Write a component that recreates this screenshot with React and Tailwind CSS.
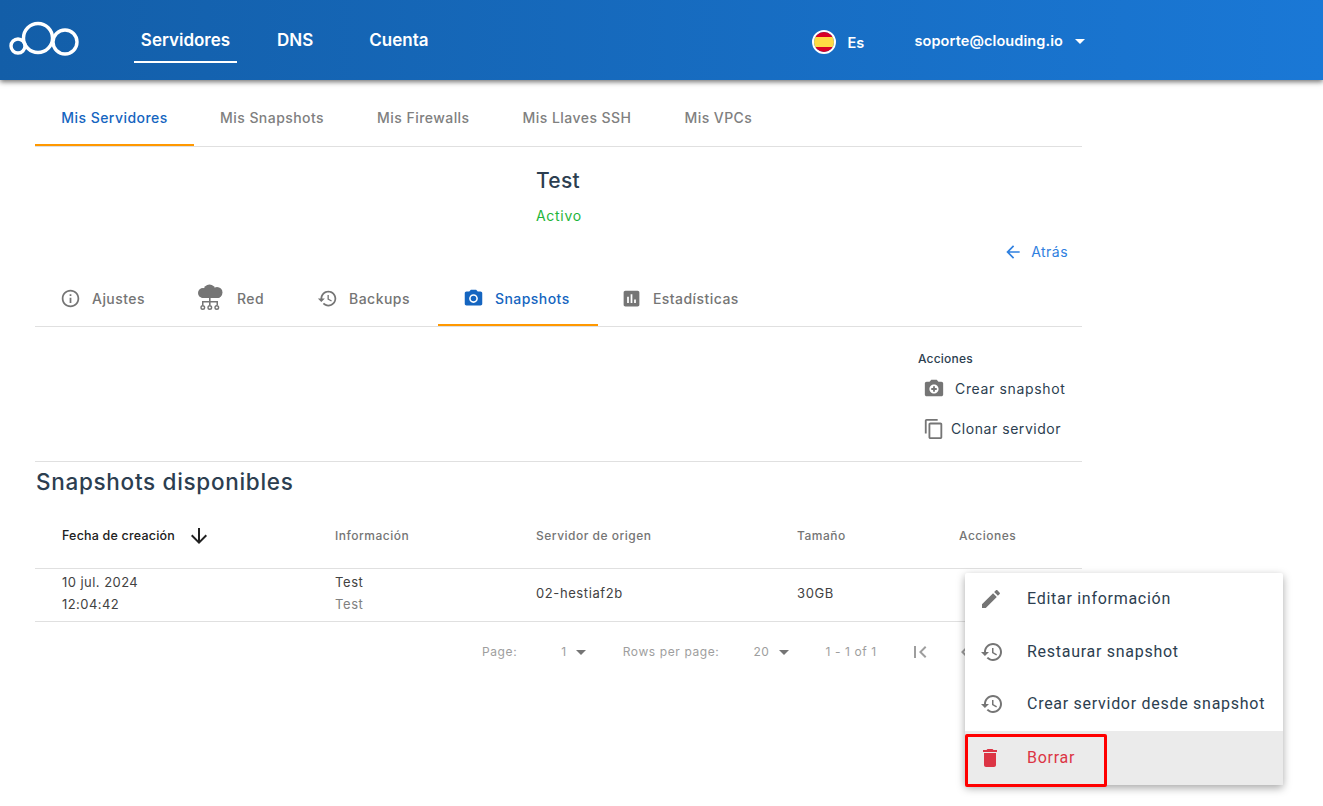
import { useState } from "react";

const paths = {
  info: "M11 7h2v2h-2zm0 4h2v6h-2zm1-9C6.48 2 2 6.48 2 12s4.48 10 10 10 10-4.48 10-10S17.52 2 12 2zm0 18c-4.41 0-8-3.59-8-8s3.59-8 8-8 8 3.59 8 8-3.59 8-8 8z",
  history: "M13 3c-4.97 0-9 4.03-9 9H1l3.89 3.89.07.14L9 12H6c0-3.87 3.13-7 7-7s7 3.13 7 7-3.13 7-7 7c-1.93 0-3.68-.79-4.94-2.06l-1.42 1.42C8.27 19.99 10.51 21 13 21c4.97 0 9-4.03 9-9s-4.03-9-9-9zm-1 5v5l4.28 2.54.72-1.21-3.5-2.08V8H12z",
  camera: "M9 2L7.17 4H4c-1.1 0-2 .9-2 2v12c0 1.1.9 2 2 2h16c1.1 0 2-.9 2-2V6c0-1.1-.9-2-2-2h-3.17L15 2H9zm3 15c-2.76 0-5-2.24-5-5s2.24-5 5-5 5 2.24 5 5-2.24 5-5 5zm0-8.2a3.2 3.2 0 1 0 0 6.4 3.2 3.2 0 0 0 0-6.4z",
  cameraAdd: "M9 2L7.17 4H4c-1.1 0-2 .9-2 2v12c0 1.1.9 2 2 2h16c1.1 0 2-.9 2-2V6c0-1.1-.9-2-2-2h-3.17L15 2H9zm3 15c-2.76 0-5-2.24-5-5s2.24-5 5-5 5 2.24 5 5-2.24 5-5 5zm-1-6H9v2h2v2h2v-2h2v-2h-2V9h-2v2z",
  stats: "M19 3H5c-1.1 0-2 .9-2 2v14c0 1.1.9 2 2 2h14c1.1 0 2-.9 2-2V5c0-1.1-.9-2-2-2zM9 17H7v-7h2v7zm4 0h-2V7h2v10zm4 0h-2v-4h2v4z",
  copy: "M16 1H4c-1.1 0-2 .9-2 2v14h2V3h12V1zm3 4H8c-1.1 0-2 .9-2 2v14c0 1.1.9 2 2 2h11c1.1 0 2-.9 2-2V7c0-1.1-.9-2-2-2zm0 16H8V7h11v14z",
  edit: "M3 17.25V21h3.75L17.81 9.94l-3.75-3.75L3 17.25zM20.71 7.04c.39-.39.39-1.02 0-1.41l-2.34-2.34c-.39-.39-1.02-.39-1.41 0l-1.83 1.83 3.75 3.75 1.83-1.83z",
  trash: "M6 19c0 1.1.9 2 2 2h8c1.1 0 2-.9 2-2V7H6v12zM19 4h-3.5l-1-1h-5l-1 1H5v2h14V4z",
  down: "M20 12l-1.41-1.41L13 16.17V4h-2v12.17l-5.58-5.59L4 12l8 8 8-8z",
  back: "M20 11H7.83l5.59-5.59L12 4l-8 8 8 8 1.41-1.41L7.83 13H20v-2z",
  first: "M18.41 16.59L13.82 12l4.59-4.59L17 6l-6 6 6 6zM6 6h2v12H6z",
  prev: "M15.41 7.41L14 6l-6 6 6 6 1.41-1.41L10.83 12z",
};

function Icon({ name, className }) {
  return (
    <svg viewBox="0 0 24 24" fill="currentColor" className={className}>
      <path d={paths[name]} />
    </svg>
  );
}

function Logo() {
  return (
    <svg viewBox="0 0 70 36" className="mb-[3px] h-[36px] w-[70px]" fill="none" stroke="white" strokeWidth="3.4">
      <circle cx="9" cy="25" r="7" />
      <circle cx="29" cy="17" r="14.5" />
      <circle cx="56" cy="21" r="12" />
    </svg>
  );
}

function Flag() {
  return (
    <div className="mt-[4px] flex h-[24px] w-[24px] flex-col overflow-hidden rounded-full border-2 border-white">
      <div className="h-[5px] bg-[#d80027]" />
      <div className="flex-1 bg-[#ffda44]" />
      <div className="h-[5px] bg-[#d80027]" />
    </div>
  );
}

function CloudNet({ className }) {
  return (
    <svg viewBox="0 0 28 28" className={className} fill="#757575">
      <circle cx="7" cy="9" r="5" />
      <circle cx="13.5" cy="6.5" r="6" />
      <circle cx="21" cy="8.5" r="5.5" />
      <rect x="5" y="8" width="19" height="6" rx="2" />
      <path d="M13 13h1.6v4H22v4h-1.5v-2.6h-5.9V21H13v-2.6H7.5V21H6v-4h7z" />
      <g fill="none" stroke="#757575" strokeWidth="1.4">
        <circle cx="6.8" cy="23.5" r="1.8" />
        <circle cx="13.8" cy="23.5" r="1.8" />
        <circle cx="20.8" cy="23.5" r="1.8" />
      </g>
    </svg>
  );
}

const caret = "h-0 w-0 border-x-[5px] border-t-[5px] border-x-transparent border-t-[#757575]";

export default function App() {
  const [sub] = useState(["Mis Snapshots", "Mis Firewalls", "Mis Llaves SSH", "Mis VPCs"]);

  return (
    <div className="relative h-[806px] w-[1323px] overflow-hidden bg-white font-['Inter',sans-serif] tracking-[0.45px] text-[#2c3e50]">
      <header className="relative flex h-[80px] items-center bg-gradient-to-r from-[#135ea8] to-[#1a78d6] pl-[9px] shadow-[0_2px_5px_rgba(0,0,0,0.55)]">
        <Logo />
        <nav className="ml-[55px] flex h-full text-[17px] font-semibold tracking-normal text-white">
          <div className="flex h-[63px] w-[103px] items-center justify-center self-start border-b-2 border-white pt-[20px]">Servidores</div>
          <div className="ml-[40px] flex h-[63px] items-center pt-[18px]">DNS</div>
          <div className="ml-[56px] flex h-[63px] items-center pt-[18px]">Cuenta</div>
        </nav>
        <div className="ml-[384px] flex items-center text-[14.5px] font-semibold tracking-[0.1px] text-white">
          <Flag />
          <span className="ml-[11px] mt-[6px]">Es</span>
          <span className="ml-[50px] mt-[2px]">soporte@clouding.io</span>
          <span className="ml-[12px] mt-[2px] h-0 w-0 border-x-[5px] border-t-[5px] border-x-transparent border-t-white" />
        </div>
      </header>

      <main className="ml-[35px] w-[1047px]">
        <div className="mt-[10px] flex h-[57px] border-b border-[#e0e0e0] text-[14px] font-medium">
          <div className="flex h-[56px] w-[159px] items-center justify-center border-b-2 border-[#ff9800] text-[#1565c0]">Mis Servidores</div>
          {sub.map((label) => (
            <div key={label} className="ml-[26px] mr-[27px] flex h-[54px] items-center text-[#808080]">{label}</div>
          ))}
        </div>

        <div className="mt-[20px] pl-[501px] text-[21px] font-medium leading-[28px] tracking-[0.3px]">Test</div>
        <div className="mt-[11px] pl-[501px] text-[14px] leading-[20px] tracking-[0.7px] text-[#1eb53a]">Activo</div>
        <div className="mt-[16px] flex items-center justify-end gap-[8px] pr-[14px] text-[14px] leading-[20px] text-[#2f80e0]">
          <Icon name="back" className="h-[20px] w-[20px]" />
          Atrás
        </div>

        <div className="mt-[13px] flex h-[52px] border-b border-[#e0e0e0] text-[14px] font-medium text-[#757575]">
          <div className="ml-[25px] flex h-[46px] items-center gap-[11px]">
            <Icon name="info" className="h-[21px] w-[21px]" />
            Ajustes
          </div>
          <div className="ml-[51px] flex h-[46px] items-center gap-[13px]">
            <CloudNet className="h-[28px] w-[28px]" />
            Red
          </div>
          <div className="ml-[53px] flex h-[46px] items-center gap-[11px]">
            <Icon name="history" className="h-[21px] w-[21px]" />
            Backups
          </div>
          <div className="ml-[28px] flex h-[51px] w-[160px] items-center gap-[11px] border-b-2 border-[#ff9800] pb-[3px] pl-[25px] text-[#1565c0]">
            <Icon name="camera" className="h-[21px] w-[21px]" />
            Snapshots
          </div>
          <div className="ml-[23px] flex h-[46px] items-center gap-[11px]">
            <Icon name="stats" className="h-[21px] w-[21px]" />
            Estadísticas
          </div>
        </div>

        <div className="flex h-[135px] flex-col border-b border-[#e0e0e0] pl-[883px]">
          <div className="mt-[24px] text-[12px] font-medium leading-[16px] tracking-[0.2px]">Acciones</div>
          <div className="mt-[11px] flex items-center text-[14px] leading-[20px] tracking-[0.65px]">
            <Icon name="cameraAdd" className="ml-[5px] h-[22px] w-[22px] text-[#757575]" />
            <span className="ml-[10px]">Crear snapshot</span>
          </div>
          <div className="mt-[18px] flex items-center text-[14px] leading-[20px] tracking-[0.55px]">
            <Icon name="copy" className="ml-[5px] h-[22px] w-[22px] text-[#757575]" />
            <span className="ml-[6px]">Clonar servidor</span>
          </div>
        </div>

        <h2 className="mt-[6px] pl-px text-[22.5px] font-medium leading-[28px] tracking-[0.7px]">Snapshots disponibles</h2>

        <div className="mt-[20px] grid h-[53px] grid-cols-[300px_201px_261px_162px_1fr] items-center border-b border-[#e0e0e0] pb-[12px] text-[12px] font-medium tracking-[0.5px] text-[#757575]">
          <div className="flex items-center pl-[27px] text-[12.5px] tracking-[0.2px] text-[#212121]">
            Fecha de creación
            <Icon name="down" className="ml-[12px] h-[24px] w-[24px]" />
          </div>
          <div>Información</div>
          <div>Servidor de origen</div>
          <div>Tamaño</div>
          <div>Acciones</div>
        </div>

        <div className="grid h-[53px] grid-cols-[300px_201px_261px_162px_1fr] items-center border-b border-[#e0e0e0] pb-[5px] text-[13px] leading-[22px] tracking-[0.6px] text-[#424242]">
          <div className="pl-[27px] tracking-[0.45px]">
            <div>10 jul. 2024</div>
            <div>12:04:42</div>
          </div>
          <div>
            <div>Test</div>
            <div className="text-[#808080]">Test</div>
          </div>
          <div>02-hestiaf2b</div>
          <div>30GB</div>
          <div />
        </div>

        <div className="flex h-[60px] items-center text-[12px] tracking-[0.6px] text-[#9e9e9e]">
          <span className="ml-[447px]">Page:</span>
          <span className="ml-[44px]">1</span>
          <span className={`ml-[9px] ${caret}`} />
          <span className="ml-[37px]">Rows per page:</span>
          <span className="ml-[34px]">20</span>
          <span className={`ml-[9px] ${caret}`} />
          <span className="ml-[37px]">1 - 1 of 1</span>
          <Icon name="first" className="ml-[31px] h-[24px] w-[24px] text-[#9e9e9e]" />
          <Icon name="prev" className="ml-[21px] h-[24px] w-[24px] text-[#9e9e9e]" />
        </div>
      </main>

      {/* menu abierto sobre la tabla */}
      <div className="absolute left-[965px] top-[573px] w-[318px] rounded-[2px] bg-white font-['Roboto',sans-serif] text-[16px] tracking-[0.72px] text-[#2c3e50] shadow-[0_3px_8px_rgba(0,0,0,0.35)]">
        <div className="flex h-[52px] items-center">
          <Icon name="edit" className="ml-[14px] h-[24px] w-[24px] text-[#757575]" />
          <span className="ml-[24px]">Editar información</span>
        </div>
        <div className="flex h-[53px] items-center">
          <Icon name="history" className="ml-[15px] h-[24px] w-[24px] text-[#757575]" />
          <span className="ml-[23px]">Restaurar snapshot</span>
        </div>
        <div className="flex h-[53px] items-center pb-[2px]">
          <Icon name="history" className="ml-[15px] h-[24px] w-[24px] text-[#757575]" />
          <span className="ml-[23px]">Crear servidor desde snapshot</span>
        </div>
        <div className="flex h-[54px] items-center bg-[#ebebeb] text-[#dc3545]">
          <Icon name="trash" className="ml-[13px] h-[24px] w-[24px]" />
          <span className="ml-[25px]">Borrar</span>
        </div>
      </div>

      {/* recuadro rojo de la captura */}
      <div className="absolute left-[965px] top-[734px] h-[53px] w-[142px] rounded-[2px] border-[3px] border-[#ff0000]" />
    </div>
  );
}
